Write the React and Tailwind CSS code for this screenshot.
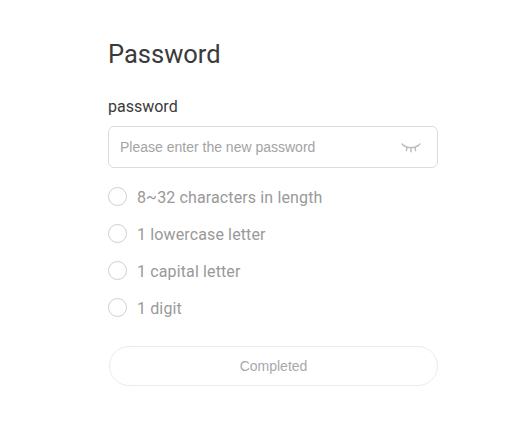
import React from 'react';

const rules = ['8~32 characters in length', '1 lowercase letter', '1 capital letter', '1 digit'];

function ClosedEye() {
  return (
    <svg width="20" height="11" viewBox="0 0 20 11" fill="none" stroke="#bcbcbc" strokeWidth="1.4" strokeLinecap="round" className="mt-[2px]">
      <path d="M3 2.6C6.5 5.4 13.5 5.4 17 2.6" />
      <path d="M1 1 3 2.8M19 1 17 2.8M6 4.4 5.4 7.6M14 4.4 14.6 7.6M10 5 10 8.8" />
    </svg>
  );
}

export default function App() {
  return (
    <div className="w-[520px] h-[443px] bg-white overflow-hidden pl-[108px] pt-[37px] font-['Roboto',sans-serif]">
      <div className="w-[330px]">
        <h1 className="text-[25.5px] leading-[34px] font-normal text-[#3a3a3a]">Password</h1>

        <label className="block mt-[25px] text-[16px] leading-[22px] text-[#3a3a3a]">password</label>

        <div className="mt-[8px] h-[42px] flex items-center justify-between pl-[11px] pr-[16px] border border-[#dcdcdc] rounded-[6px]">
          <span className="font-['Liberation_Sans',sans-serif] text-[14px] text-[#a3a3a3]">Please enter the new password</span>
          <ClosedEye />
        </div>

        <ul className="mt-[18px] flex flex-col gap-[17px]">
          {rules.map((rule) => (
            <li key={rule} className="flex items-center gap-[10px] h-[20px]">
              <span className="w-[19px] h-[19px] rounded-full border border-[#cfcfcf]" />
              <span className="pt-[4px] text-[16px] leading-[20px] tracking-[0.13px] text-[#999999]">{rule}</span>
            </li>
          ))}
        </ul>

        <button className="mt-[29px] ml-px w-[329px] h-[40px] rounded-full border border-[#ebebeb] bg-white font-['Liberation_Sans',sans-serif] text-[14px] text-[#a8a8ad]">
          Completed
        </button>
      </div>
    </div>
  );
}
